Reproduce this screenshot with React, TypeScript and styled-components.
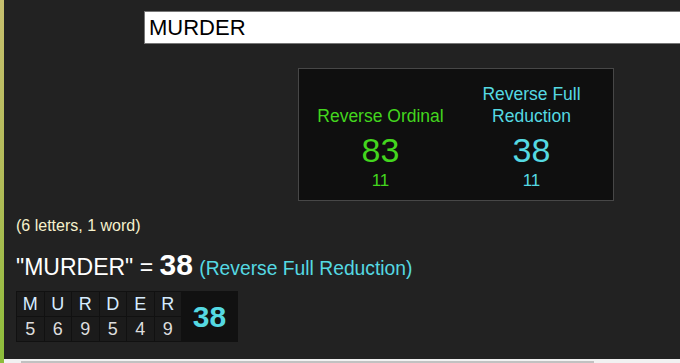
import styled, { createGlobalStyle } from "styled-components";

const GlobalStyle = createGlobalStyle`
  html, body {
    margin: 0;
    padding: 0;
    background: #222222;
    overflow: hidden;
  }
  body {
    font-family: "Liberation Sans", Arial, sans-serif;
  }
`;

const green = "#43d61e";
const cyan = "#55d9e2";

const ciphers = [
  { name: ["Reverse Ordinal"], value: 83, reduced: 11, color: green },
  { name: ["Reverse Full", "Reduction"], value: 38, reduced: 11, color: cyan },
];

const letters = [
  { ch: "M", n: 5 },
  { ch: "U", n: 6 },
  { ch: "R", n: 9 },
  { ch: "D", n: 5 },
  { ch: "E", n: 4 },
  { ch: "R", n: 9 },
];

export default function App() {
  return (
    <>
      <GlobalStyle />
      <Page>
        <Strip />
        <Main>
          <SearchRow>
            <SearchInput value="MURDER" readOnly />
          </SearchRow>
          <ResultBox>
            {ciphers.map((c) => (
              <Cipher key={c.name.join(" ")} $color={c.color}>
                <CipherLabel>
                  {c.name.map((line) => (
                    <div key={line}>{line}</div>
                  ))}
                </CipherLabel>
                <CipherValue>{c.value}</CipherValue>
                <CipherSub>{c.reduced}</CipherSub>
              </Cipher>
            ))}
          </ResultBox>
          <Count>(6 letters, 1 word)</Count>
          <Headline>
            "MURDER" = <Total>38</Total> <CipherName>(Reverse Full Reduction)</CipherName>
          </Headline>
          <Breakdown>
            {letters.map((l, i) => (
              <LetterCell key={"l" + i} $col={i + 1}>
                {l.ch}
              </LetterCell>
            ))}
            {letters.map((l, i) => (
              <NumberCell key={"n" + i} $col={i + 1}>
                {l.n}
              </NumberCell>
            ))}
            <SumCell>38</SumCell>
          </Breakdown>
          <ScrollTrack>
            <ScrollThumb />
          </ScrollTrack>
        </Main>
      </Page>
    </>
  );
}

const Page = styled.div`
  display: flex;
  width: 680px;
  height: 363px;
  overflow: hidden;
  background: #222222;
`;

const Strip = styled.div`
  flex: 0 0 4px;
  background: linear-gradient(180deg, #c6bf6e 0%, #b1bb58 50%, #8cbd3a 100%);
`;

const Main = styled.div`
  flex: 1;
  min-width: 0;
  display: flex;
  flex-direction: column;
  align-items: flex-start;
`;

const SearchRow = styled.div`
  padding: 11px 0 0 140px;
`;

const SearchInput = styled.input`
  box-sizing: border-box;
  width: 600px;
  height: 33px;
  border: 1px solid #767676;
  background: #ffffff;
  color: #000000;
  font-family: "Liberation Sans", Arial, sans-serif;
  font-size: 22px;
  padding: 0 4px;
  outline: none;
`;

const ResultBox = styled.div`
  box-sizing: border-box;
  margin: 24px 0 0 294px;
  width: 316px;
  height: 133px;
  padding: 14px 6px 0;
  background: #0f0f0f;
  border: 1px solid #474747;
  display: grid;
  grid-template-columns: repeat(2, 151px);
  align-items: end;
`;

const Cipher = styled.div<{ $color: string }>`
  display: flex;
  flex-direction: column;
  align-items: center;
  text-align: center;
  color: ${({ $color }) => $color};
  padding-bottom: 10px;
`;

const CipherLabel = styled.div`
  font-size: 17.5px;
  line-height: 22px;
`;

const CipherValue = styled.div`
  font-size: 34px;
  line-height: 39px;
  margin-top: 4px;
`;

const CipherSub = styled.div`
  font-size: 17px;
  line-height: 20px;
  margin-top: 1px;
`;

const Count = styled.div`
  margin: 16px 0 0 12px;
  font-size: 16px;
  line-height: 18px;
  color: #f6f1cc;
`;

const Headline = styled.div`
  margin: 15px 0 0 12px;
  font-size: 23px;
  line-height: 32px;
  color: #ffffff;
  white-space: nowrap;
`;

const Total = styled.b`
  font-size: 30px;
  line-height: 1;
`;

const CipherName = styled.span`
  font-size: 19.3px;
  color: ${cyan};
`;

const Breakdown = styled.div`
  margin: 6px 0 0 12px;
  display: grid;
  grid-template-columns: repeat(6, 26.5px) 55px;
  grid-template-rows: 24px 24px;
  gap: 1px;
  padding: 1px;
  background: #111111;
`;

const Cell = styled.div<{ $col: number }>`
  grid-column: ${({ $col }) => $col};
  display: flex;
  align-items: center;
  justify-content: center;
  background: #1b1b1b;
  font-size: 18px;
`;

const LetterCell = styled(Cell)`
  grid-row: 1;
  color: #d6ecff;
`;

const NumberCell = styled(Cell)`
  grid-row: 2;
  color: #dddddd;
`;

const SumCell = styled.div`
  grid-column: 7;
  grid-row: 1 / span 2;
  display: flex;
  align-items: center;
  justify-content: center;
  color: ${cyan};
  font-size: 30px;
  font-weight: bold;
`;

const ScrollTrack = styled.div`
  align-self: stretch;
  margin-top: 17px;
  height: 15px;
  background: #f1f1f1;
  padding: 2px 0 0 17px;
`;

const ScrollThumb = styled.div`
  width: 573px;
  height: 10px;
  background: #c1c1c1;
`;
